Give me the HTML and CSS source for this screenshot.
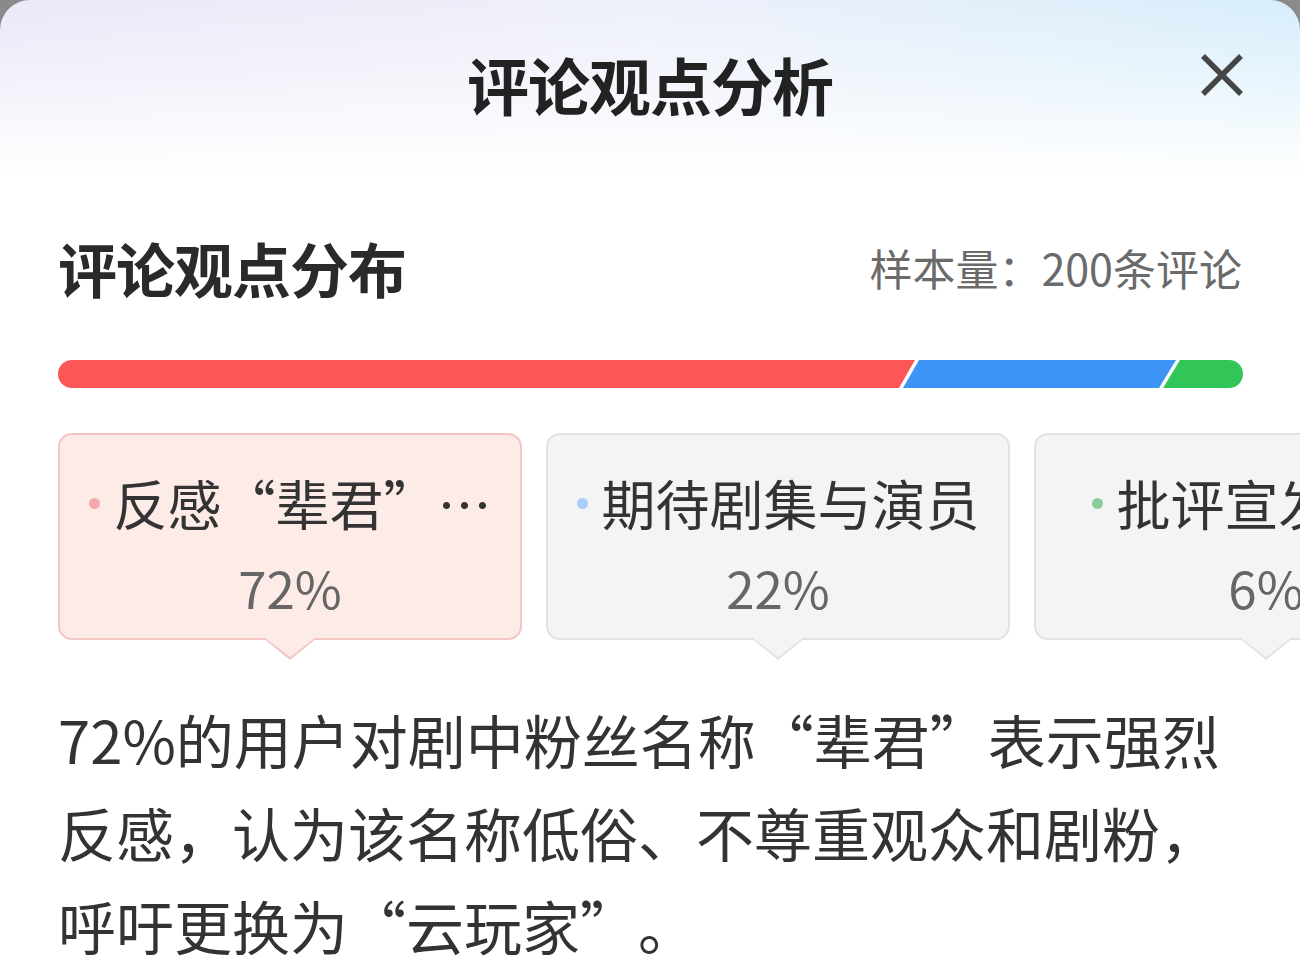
FILE: index.html
```html
<!DOCTYPE html>
<html lang="zh-CN">
<head>
<meta charset="utf-8">
<title>评论观点分析</title>
<link rel="stylesheet" href="styles.css">
</head>
<body>
<div class="sheet">
  <header class="header">
    <h1 class="title">评论观点分析</h1>
    <button class="close" aria-label="关闭">
      <svg width="44" height="44" viewBox="0 0 44 44"><path d="M3 3 L41 41 M41 3 L3 41" stroke="#454545" stroke-width="5.5" stroke-linecap="butt" fill="none"/></svg>
    </button>
  </header>

  <section class="content">
    <div class="dist-head">
      <h2 class="dist-title">评论观点分布</h2>
      <span class="sample">样本量：200条评论</span>
    </div>

    <svg class="bar" width="1185" height="28" viewBox="0 0 1185 28">
      <defs><clipPath id="round"><rect x="0" y="0" width="1185" height="28" rx="14" ry="14"/></clipPath></defs>
      <g clip-path="url(#round)">
        <polygon points="0,0 857,0 841,28 0,28" fill="#fd5656"/>
        <polygon points="861,0 1118,0 1101,28 845,28" fill="#3d94f6"/>
        <polygon points="1122,0 1185,0 1185,28 1105,28" fill="#31c657"/>
      </g>
    </svg>

    <div class="cards">
      <div class="card card-active">
        <div class="label"><span class="dot dot-red"></span><span class="txt">反感“辈君”…</span></div>
        <div class="pct">72%</div>
      </div>
      <div class="card">
        <div class="label"><span class="dot dot-blue"></span><span class="txt">期待剧集与演员</span></div>
        <div class="pct">22%</div>
      </div>
      <div class="card">
        <div class="label"><span class="dot dot-green"></span><span class="txt">批评宣发营销</span></div>
        <div class="pct">6%</div>
      </div>
    </div>

    <p class="desc">72%的用户对剧中粉丝名称“辈君”表示强烈反感，认为该名称低俗、不尊重观众和剧粉，呼吁更换为“云玩家”。</p>
  </section>
</div>
</body>
</html>
```

FILE: styles.css
```css
html, body {
  margin: 0;
  padding: 0;
}
body {
  background: #8a8a8a;
  font-family: "Noto Sans CJK SC", "Noto Sans", sans-serif;
  color: #333;
  text-spacing-trim: space-all;
}
.sheet {
  width: 1300px;
  min-height: 973px;
  border-radius: 30px 30px 0 0;
  overflow: hidden;
  background:
    linear-gradient(to bottom, rgba(255,255,255,0) 0px, rgba(255,255,255,0.35) 70px, #ffffff 175px),
    linear-gradient(to right, #ebe8f8 0%, #eef0fa 50%, #d7eefb 100%);
}
.header {
  height: 168px;
  display: grid;
  grid-template-columns: 1fr auto 1fr;
  align-items: center;
}
.title {
  grid-column: 2;
  margin: 0;
  font-size: 62px;
  font-weight: 700;
  line-height: 1;
  color: #222;
  letter-spacing: -1px;
}
.close {
  grid-column: 3;
  justify-self: end;
  align-self: start;
  margin: 53px 56px 0 0;
  padding: 0;
  border: 0;
  background: none;
  width: 44px;
  height: 44px;
}
.close svg { display: block; }
.content {
  padding: 0 57px 0 58px;
}
.dist-head {
  margin-top: 64px;
  height: 70px;
  display: flex;
  align-items: center;
  justify-content: space-between;
}
.dist-title {
  margin: 0;
  font-size: 59px;
  font-weight: 700;
  line-height: 1;
  color: #2a2a2a;
  letter-spacing: -1px;
}
.sample {
  font-size: 43px;
  color: #6a6a6a;
  line-height: 1;
  margin-right: 1px;
}
.bar {
  display: block;
  margin-top: 58px;
}
.cards {
  margin-top: 45px;
  display: flex;
  gap: 24px;
}
.card {
  position: relative;
  flex: 0 0 464px;
  height: 207px;
  box-sizing: border-box;
  border: 2px solid #e2e2e2;
  border-radius: 14px;
  background: #f4f4f4;
  padding: 33px 20px 0;
  display: flex;
  flex-direction: column;
  align-items: center;
}
.card::before,
.card::after {
  content: "";
  position: absolute;
  top: 100%;
  left: 50%;
  clip-path: polygon(0 0, 100% 0, 50% 100%);
}
.card::before {
  width: 54px;
  height: 22px;
  margin-left: -27px;
  background: #e2e2e2;
}
.card::after {
  width: 50px;
  height: 19px;
  margin-left: -25px;
  background: #f4f4f4;
}
.card-active {
  background: #fcebe7;
  border-color: #f2c6c2;
}
.card-active::before { background: #f2c6c2; }
.card-active::after { background: #fcebe7; }
.label {
  display: flex;
  align-items: center;
  height: 70px;
  white-space: nowrap;
}
.dot {
  width: 11px;
  height: 11px;
  border-radius: 50%;
  margin-right: 14px;
  flex: none;
}
.dot-red { background: #f5a9ab; }
.dot-blue { background: #a8cdf6; }
.dot-green { background: #8ecb9a; }
.txt {
  font-size: 54px;
  line-height: 70px;
  color: #333;
}
.pct {
  margin-top: 19px;
  font-size: 51px;
  line-height: 60px;
  color: #666;
}
.desc {
  margin: 53px 0 0;
  font-size: 58px;
  line-height: 93px;
  color: #333;
}
```
